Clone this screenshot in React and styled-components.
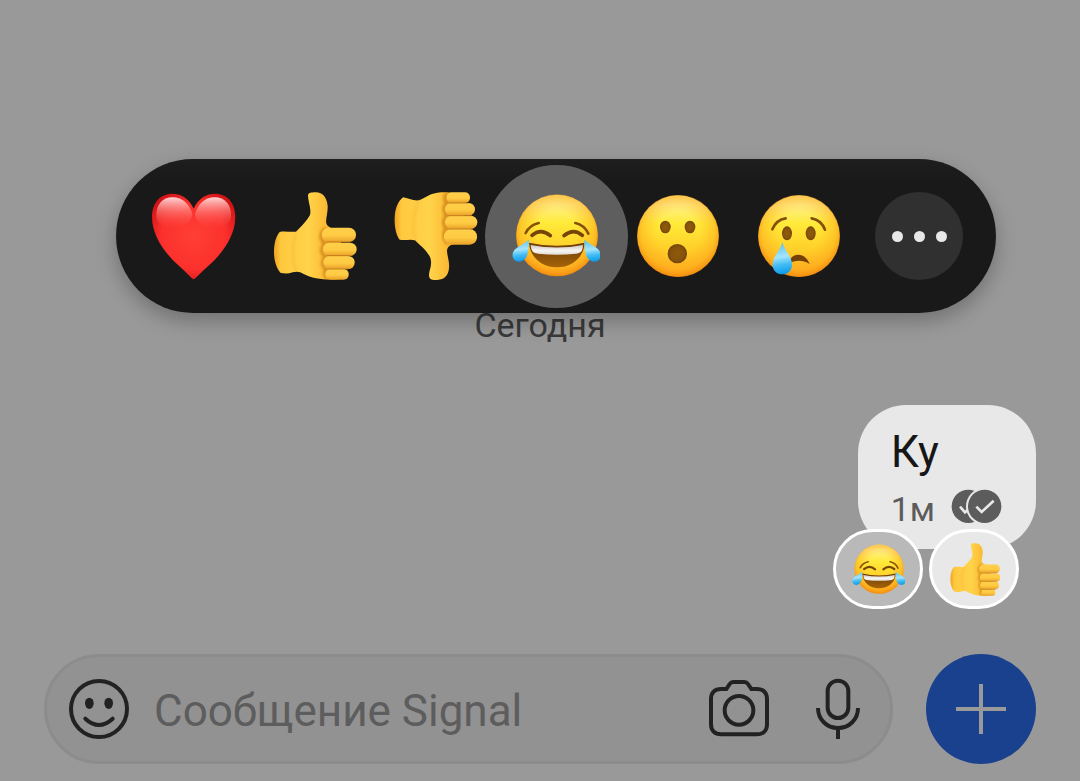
import React from "react";
import styled, { createGlobalStyle, css } from "styled-components";

const GlobalStyle = createGlobalStyle`
  *, *::before, *::after { box-sizing: border-box; }
  body {
    margin: 0;
    background: #999999;
    font-family: Roboto, "Noto Sans", sans-serif;
  }
  button, input { font: inherit; }
`;

const Screen = styled.main`
  display: flex;
  flex-direction: column;
  min-height: 100vh;
  background: #999999;
`;

const Thread = styled.section`
  display: flex;
  flex-direction: column;
  flex: 1;
  padding: 159px 44px 45px;
`;

const ReactionBar = styled.div`
  position: relative;
  z-index: 1;
  display: flex;
  justify-content: space-between;
  margin: 0 40px 0 72px;
  padding: 33px;
  border-radius: 77px;
  background: linear-gradient(#1e1e1e, #191919 24px);
  box-shadow: 0 8px 20px rgba(0, 0, 0, 0.26);
`;

const plainButton = css`
  display: flex;
  align-items: center;
  justify-content: center;
  flex: none;
  padding: 0;
  border: 0;
  background: none;
  cursor: pointer;
`;

const ReactionButton = styled.button`
  ${plainButton}
  position: relative;
  width: 88px;
  height: 88px;
  border-radius: 50%;

  &::before {
    content: "";
    display: ${(p) => (p.$selected ? "block" : "none")};
    position: absolute;
    inset: -27px -28px -28px -27px;
    border-radius: 50%;
    background: #5e5e5e;
  }
`;

const MoreButton = styled.button`
  ${plainButton}
  gap: 11px;
  width: 88px;
  height: 88px;
  border-radius: 50%;
  background: #303030;
`;

const Dot = styled.span`
  width: 11px;
  height: 11px;
  border-radius: 50%;
  background: #e8e8e8;
`;

const EmojiSvg = styled.svg`
  position: relative;
  display: block;
  width: ${(p) => p.$size}px;
  height: ${(p) => p.$size}px;
`;

const DateLabel = styled.p`
  margin: -8px 0 60px;
  color: #393939;
  font-size: 34px;
  line-height: 40px;
  text-align: center;
`;

const Message = styled.article`
  display: flex;
  flex-direction: column;
  align-items: flex-end;
`;

const Bubble = styled.div`
  padding: 21px 33px 20px;
  border-radius: 48px;
  background: #e8e8e8;
`;

const MessageText = styled.p`
  margin: 0 0 11px;
  color: #161616;
  font-size: 44px;
  line-height: 52px;
`;

const Meta = styled.div`
  display: flex;
  align-items: flex-start;
  justify-content: space-between;
  gap: 16px;
  color: #5c5c5c;
  font-size: 34px;
  line-height: 40px;
`;

const ReceiptSvg = styled.svg`
  display: block;
  width: 52px;
  height: 36px;
`;

const Chips = styled.div`
  position: relative;
  display: flex;
  gap: 6px;
  margin: -20px 17px 0 0;
`;

const Chip = styled.button`
  ${plainButton}
  width: 90px;
  height: 80px;
  border: 3px solid #ffffff;
  border-radius: 40px;
  background: ${(p) => (p.$own ? "#b9b9b9" : "#e8e8e8")};
`;

const Composer = styled.form`
  display: flex;
  align-items: center;
  gap: 33px;
  padding: 0 44px 17px;
`;

const InputPill = styled.div`
  display: flex;
  align-items: center;
  flex: 1;
  min-width: 0;
  height: 110px;
  padding: 0 21px;
  border: 3px solid #8c8c8c;
  border-radius: 55px;
  background: #929292;
`;

const MessageInput = styled.input`
  flex: 1;
  min-width: 0;
  margin: 0 24px;
  padding: 4px 0 0;
  border: 0;
  outline: 0;
  background: none;
  color: #1b1b1b;
  font-size: 44px;
  line-height: 52px;

  &::placeholder {
    color: #5d5d5d;
    opacity: 1;
  }
`;

const IconButton = styled.button`
  ${plainButton}
  width: 62px;
  height: 62px;
  color: #222222;
`;

const Tools = styled.div`
  display: flex;
  gap: 37px;
`;

const AttachButton = styled.button`
  ${plainButton}
  width: 110px;
  height: 110px;
  border-radius: 50%;
  background: #1a418e;
  color: #999999;
`;

const IconSvg = styled.svg`
  display: block;
  width: 62px;
  height: 62px;
  fill: none;
  stroke: currentColor;
  stroke-width: 12;
`;

const SharedPaint = styled.svg`
  position: absolute;
  width: 0;
  height: 0;
`;

function EmojiPaint() {
  return (
    <SharedPaint aria-hidden="true">
      <defs>
        <linearGradient id="face" x1="0" y1="0" x2="0" y2="1">
          <stop offset="0" stopColor="#ffe37a" />
          <stop offset="0.12" stopColor="#fff08a" />
          <stop offset="0.35" stopColor="#ffea38" />
          <stop offset="0.6" stopColor="#ffd52c" />
          <stop offset="1" stopColor="#ffae1e" />
        </linearGradient>
        <radialGradient id="faceEdge" cx="0.5" cy="0.46" r="0.56">
          <stop offset="0.45" stopColor="#ffab1c" stopOpacity="0" />
          <stop offset="0.8" stopColor="#fca31a" stopOpacity="0.45" />
          <stop offset="1" stopColor="#ee8008" stopOpacity="0.95" />
        </radialGradient>
        <linearGradient id="tear" x1="0.4" y1="0" x2="0.5" y2="1">
          <stop offset="0" stopColor="#5bbfe8" />
          <stop offset="0.45" stopColor="#a4e5fb" />
          <stop offset="0.7" stopColor="#42bdf4" />
          <stop offset="1" stopColor="#0d9ae9" />
        </linearGradient>
        <linearGradient id="teeth" x1="0" y1="0" x2="0" y2="1">
          <stop offset="0" stopColor="#cfc9c2" />
          <stop offset="0.6" stopColor="#f8f6f4" />
          <stop offset="1" stopColor="#dedad4" />
        </linearGradient>
        <linearGradient id="mouth" x1="0" y1="0" x2="0" y2="1">
          <stop offset="0" stopColor="#6b3a08" />
          <stop offset="1" stopColor="#a66408" />
        </linearGradient>
        <radialGradient id="eye">
          <stop offset="0" stopColor="#8f5a0a" />
          <stop offset="0.7" stopColor="#86530c" />
          <stop offset="1" stopColor="#6f430c" />
        </radialGradient>
        <radialGradient id="heart" cx="0.5" cy="0.5" r="0.6">
          <stop offset="0" stopColor="#ff3f36" />
          <stop offset="0.65" stopColor="#fb302c" />
          <stop offset="1" stopColor="#cf1216" />
        </radialGradient>
        <linearGradient id="heartShine" x1="0" y1="0" x2="0" y2="1">
          <stop offset="0" stopColor="#ffe0e0" stopOpacity="0.95" />
          <stop offset="0.4" stopColor="#ff9c98" stopOpacity="0.6" />
          <stop offset="1" stopColor="#ff4a45" stopOpacity="0" />
        </linearGradient>
        <linearGradient id="hand" x1="0" y1="0" x2="1" y2="0">
          <stop offset="0" stopColor="#f0a31e" />
          <stop offset="0.1" stopColor="#ffc93f" />
          <stop offset="0.5" stopColor="#ffd34a" />
          <stop offset="0.7" stopColor="#fdbf38" />
          <stop offset="1" stopColor="#eda126" />
        </linearGradient>
        <linearGradient id="finger" x1="0" y1="0" x2="0" y2="1">
          <stop offset="0" stopColor="#ffce4a" />
          <stop offset="0.55" stopColor="#ffcb43" />
          <stop offset="1" stopColor="#e8a028" />
        </linearGradient>
        <filter id="soft" x="-50%" y="-20%" width="200%" height="140%">
          <feGaussianBlur stdDeviation="4" />
        </filter>
      </defs>
    </SharedPaint>
  );
}

function Heart() {
  return (
    <>
      <path d="M251 388C247 388 232 370 205 346C165 310 126 258 126 201C126 158 151 131 187 131C216 131 239 148 251 176C263 148 286 131 315 131C351 131 376 158 376 201C376 258 337 310 297 346C270 370 255 388 251 388Z" fill="url(#heart)" />
      <path d="M139 200C137 164 158 142 188 142C218 142 239 164 247 192C243 222 216 236 190 236C165 236 143 226 139 200Z" fill="url(#heartShine)" />
      <path d="M363 200C365 164 344 142 314 142C284 142 263 164 255 192C259 222 286 236 312 236C337 236 359 226 363 200Z" fill="url(#heartShine)" />
    </>
  );
}

function ThumbUp() {
  return (
    <>
      <path d="M114 47C114 39 121 37 138 37C158 37 170 52 173 77C174 99 166 118 169 130C172 140 183 145 192 148L222 205L205 298C166 301 127 296 101 282C89 275 82 273 68 277C54 282 42 281 31 278C18 263 12 239 12 216C12 190 18 169 29 156C43 152 58 157 78 155C91 143 112 120 120 105C125 88 114 63 114 47Z" fill="url(#hand)" />
      <path d="M79 158C65 192 65 240 79 270" fill="none" stroke="#e99c25" strokeWidth="6" opacity="0.3" filter="url(#soft)" />
      <path d="M168 146C148 158 151 178 164 190C151 207 155 221 166 230C154 247 157 260 171 268C160 279 165 291 174 296" fill="none" stroke="#b96a0b" strokeWidth="10" opacity="0.65" filter="url(#soft)" />
      <rect x="166" y="267" width="70" height="32" rx="15" fill="url(#finger)" />
      <rect x="160" y="228" width="94" height="39" rx="19" fill="url(#finger)" />
      <rect x="159" y="188" width="101" height="40" rx="20" fill="url(#finger)" />
      <rect x="155" y="143" width="103" height="43" rx="21" fill="url(#finger)" />
      <path d="M169 186H239M170 227H241M174 267H234" fill="none" stroke="#b87316" strokeWidth="3" strokeLinecap="round" opacity="0.8" />
    </>
  );
}

function ThumbDown() {
  return (
    <>
      <path d="M99 142C113 144 129 153 147 151C168 143 181 129 213 127C250 126 264 133 277 145L285 230L265 279C247 282 232 287 231 302C232 320 239 335 237 355C235 376 224 389 202 390C186 391 177 389 177 376C177 360 188 346 181 323C171 302 151 287 135 271C119 266 107 273 89 269C78 255 73 230 74 203C75 175 84 154 99 142Z" fill="url(#hand)" />
      <path d="M147 151C130 181 126 234 136 270" fill="none" stroke="#e99c25" strokeWidth="6" opacity="0.3" filter="url(#soft)" />
      <path d="M233 130C220 140 223 151 232 158C219 170 220 186 231 197C218 209 219 225 230 235C217 250 222 272 235 281" fill="none" stroke="#b96a0b" strokeWidth="10" opacity="0.65" filter="url(#soft)" />
      <rect x="230" y="127" width="70" height="32" rx="15" fill="url(#finger)" />
      <rect x="225" y="159" width="90" height="38" rx="19" fill="url(#finger)" />
      <rect x="225" y="197" width="97" height="40" rx="20" fill="url(#finger)" />
      <rect x="222" y="237" width="99" height="47" rx="22" fill="url(#finger)" />
      <path d="M237 159H293M235 197H305M234 237H307" fill="none" stroke="#b87316" strokeWidth="3" strokeLinecap="round" opacity="0.8" />
    </>
  );
}

function Face({ cx, cy }) {
  return (
    <>
      <circle cx={cx} cy={cy} r="122" fill="url(#face)" />
      <circle cx={cx} cy={cy} r="123" fill="url(#faceEdge)" />
    </>
  );
}

function Joy() {
  return (
    <>
      <Face cx={141} cy={151} />
      <path d="M47 144Q59 120 86 114M196 114Q223 120 235 146" fill="none" stroke="#89500a" strokeWidth="8" strokeLinecap="round" />
      <path d="M66 151Q93 128 121 152M162 152Q190 128 217 151" fill="none" stroke="#764407" strokeWidth="11" strokeLinecap="round" />
      <path d="M57 173Q141 192 224 173C222 216 187 247 141 247C94 247 60 216 57 173Z" fill="url(#mouth)" />
      <path d="M62 180Q141 195 219 180C218 201 211 204 198 206Q141 212 84 206C69 204 64 199 62 180Z" fill="url(#teeth)" />
      <path d="M57 164C57 195 53 214 44 223C34 233 18 232 11 222C4 211 8 198 20 189C32 180 43 176 57 164Z" fill="url(#tear)" />
      <path d="M223 164C223 195 227 214 236 223C246 233 262 232 269 222C276 211 272 198 260 189C248 180 237 176 223 164Z" fill="url(#tear)" />
    </>
  );
}

function Wow() {
  return (
    <>
      <Face cx={174} cy={258} />
      <ellipse cx="136" cy="231" rx="16" ry="19" fill="url(#eye)" />
      <ellipse cx="210" cy="231" rx="16" ry="19" fill="url(#eye)" />
      <circle cx="172" cy="311" r="29" fill="url(#eye)" />
    </>
  );
}

function Cry() {
  return (
    <>
      <Face cx={537} cy={258} />
      <path d="M457 238Q469 209 497 205M575 205Q604 210 615 239" fill="none" stroke="#85500c" strokeWidth="8" strokeLinecap="round" />
      <ellipse cx="501" cy="250" rx="15" ry="21" fill="url(#eye)" />
      <ellipse cx="572" cy="250" rx="15" ry="21" fill="url(#eye)" />
      <path d="M505 340C513 305 556 305 569 342C548 329 528 329 505 340Z" fill="#744006" />
      <path d="M487 277C493 302 516 318 516 344C516 362 503 373 487 373C471 373 458 362 458 344C458 318 481 302 487 277Z" fill="url(#tear)" />
    </>
  );
}

const emojis = {
  heart: { label: "❤️", viewBox: "117 126 264 264", Drawing: Heart },
  up: { label: "👍", viewBox: "0 36 264 264", Drawing: ThumbUp },
  down: { label: "👎", viewBox: "63 126 264 264", Drawing: ThumbDown },
  joy: { label: "😂", viewBox: "6 21 264 264", Drawing: Joy },
  wow: { label: "😮", viewBox: "39 126 264 264", Drawing: Wow },
  cry: { label: "😢", viewBox: "402 126 264 264", Drawing: Cry },
};

function Emoji({ name, size }) {
  const { viewBox, Drawing } = emojis[name];
  return (
    <EmojiSvg $size={size} viewBox={viewBox} aria-hidden="true">
      <Drawing />
    </EmojiSvg>
  );
}

function Receipts() {
  return (
    <ReceiptSvg viewBox="0 0 156 108" role="img" aria-label="Прочитано">
      <circle cx="52" cy="52" r="50" fill="#5c5c5c" />
      <path d="M27 53L42 70L58 56" fill="none" stroke="#e8e8e8" strokeWidth="8" />
      <circle cx="101" cy="52" r="56" fill="#e8e8e8" />
      <circle cx="101" cy="52" r="50" fill="#5c5c5c" />
      <path d="M76 53L92 69L128 35" fill="none" stroke="#e8e8e8" strokeWidth="8" />
    </ReceiptSvg>
  );
}

export default function App() {
  return (
    <Screen>
      <GlobalStyle />
      <EmojiPaint />
      <Thread>
        <ReactionBar role="toolbar">
          {Object.keys(emojis).map((name) => (
            <ReactionButton
              key={name}
              type="button"
              $selected={name === "joy"}
              aria-pressed={name === "joy"}
              aria-label={emojis[name].label}
            >
              <Emoji name={name} size={88} />
            </ReactionButton>
          ))}
          <MoreButton type="button" aria-label="Ещё">
            <Dot />
            <Dot />
            <Dot />
          </MoreButton>
        </ReactionBar>
        <DateLabel>Сегодня</DateLabel>
        <Message>
          <Bubble>
            <MessageText>Ку</MessageText>
            <Meta>
              <time>1м</time>
              <Receipts />
            </Meta>
          </Bubble>
          <Chips>
            <Chip type="button" $own aria-label="😂">
              <Emoji name="joy" size={53} />
            </Chip>
            <Chip type="button" aria-label="👍">
              <Emoji name="up" size={53} />
            </Chip>
          </Chips>
        </Message>
      </Thread>
      <Composer>
        <InputPill>
          <IconButton type="button" aria-label="Эмодзи">
            <IconSvg viewBox="114 114 186 186">
              <circle cx="207" cy="207" r="84" />
              <ellipse cx="178" cy="190" rx="13" ry="17" fill="currentColor" stroke="none" />
              <ellipse cx="236" cy="190" rx="13" ry="17" fill="currentColor" stroke="none" />
              <path d="M166 236Q207 274 248 236" strokeLinecap="round" />
            </IconSvg>
          </IconButton>
          <MessageInput type="text" placeholder="Сообщение Signal" aria-label="Сообщение Signal" />
          <Tools>
            <IconButton type="button" aria-label="Камера">
              <IconSvg viewBox="84 114 186 186">
                <path d="M93 177C93 158 104 147 123 147H139L149 132Q153 126 160 126H193Q200 126 204 132L214 147H231C250 147 261 158 261 177V253C261 272 250 283 231 283H123C104 283 93 272 93 253Z" />
                <circle cx="177" cy="211" r="43" />
              </IconSvg>
            </IconButton>
            <IconButton type="button" aria-label="Голосовое сообщение">
              <IconSvg viewBox="381 114 186 186">
                <rect x="443" y="122" width="62" height="112" rx="31" />
                <path d="M414 204C414 238 440 264 474 264C508 264 534 238 534 204M474 264V297" />
              </IconSvg>
            </IconButton>
          </Tools>
        </InputPill>
        <AttachButton type="button" aria-label="Вложение">
          <IconSvg viewBox="0 0 186 186">
            <path d="M93 18V168M18 93H168" />
          </IconSvg>
        </AttachButton>
      </Composer>
    </Screen>
  );
}
